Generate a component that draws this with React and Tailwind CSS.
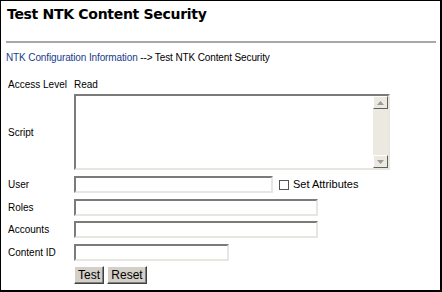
import React from "react";

const inset = "border-2 border-t-[#7b7b7b] border-l-[#7b7b7b] border-b-[#e8e6e0] border-r-[#e8e6e0] bg-white";

function Row({ label, children, className = "" }) {
  return (
    <div className={"flex items-center " + className}>
      <div className="w-[66px] shrink-0">{label}</div>
      {children}
    </div>
  );
}

function Btn({ children, w }) {
  return (
    <button
      className={"h-[18px] bg-[#d4d0c8] border border-t-[#ffffff] border-l-[#ffffff] border-b-[#404040] border-r-[#404040] shadow-[inset_-1px_-1px_0_#808080] text-[12px] text-black leading-none " + w}
      style={{ fontFamily: '"Liberation Sans", Arial, sans-serif' }}
    >
      {children}
    </button>
  );
}

export default function App() {
  return (
    <div className="w-[442px] h-[292px] bg-white border-l border-t border-r-2 border-b-2 border-black overflow-hidden text-black"
      style={{ fontFamily: '"Liberation Sans", Arial, sans-serif' }}>
      <div className="pl-[6px] pt-[5px] text-[14px] leading-[17px] font-bold tracking-[-0.3px]" style={{ fontFamily: '"DejaVu Sans", Verdana, sans-serif' }}>
        Test NTK Content Security
      </div>
      <div className="ml-[5px] mr-[4px] mt-[18px] h-[2px] bg-[#a8a8a8]" />
      <div className="pl-[5px] mt-[9px] text-[10px] leading-[12px] tracking-[-0.12px]">
        <span className="text-[#1a3c8c]">NTK Configuration Information</span> --&gt; Test NTK Content Security
      </div>
      <div className="pl-[7px] mt-[13px] text-[10px] flex flex-col">
        <Row label="Access Level" className="h-[14px]">
          <span>Read</span>
        </Row>
        <Row label="Script" className="mt-[3px]">
          <div className={"w-[316px] h-[76px] flex justify-end " + inset}>
            <div className="w-[15px] h-full bg-[#ece9e0] flex flex-col justify-between">
              <div className="h-[13px] w-[15px] bg-[#ece9e0] border border-t-white border-l-white border-b-[#606060] border-r-[#606060] flex items-center justify-center">
                <svg width="7" height="4" viewBox="0 0 7 4"><path d="M3.5 0 L7 4 L0 4 Z" fill="#9a9a9a" /></svg>
              </div>
              <div className="h-[13px] w-[15px] bg-[#ece9e0] border border-t-white border-l-white border-b-[#606060] border-r-[#606060] flex items-center justify-center">
                <svg width="7" height="4" viewBox="0 0 7 4"><path d="M0 0 L7 0 L3.5 4 Z" fill="#9a9a9a" /></svg>
              </div>
            </div>
          </div>
        </Row>
        <Row label="User" className="mt-[6px]">
          <div className={"w-[199px] h-[17px] " + inset} />
          <div className="ml-[6px] w-[10px] h-[10px] border border-[#555] bg-white" />
          <span className="ml-[4px] text-[11px]">Set Attributes</span>
        </Row>
        <Row label="Roles" className="mt-[6px]">
          <div className={"w-[244px] h-[17px] " + inset} />
        </Row>
        <Row label="Accounts" className="mt-[5px]">
          <div className={"w-[244px] h-[17px] " + inset} />
        </Row>
        <Row label="Content ID" className="mt-[6px]">
          <div className={"w-[155px] h-[17px] " + inset} />
        </Row>
        <Row label="" className="mt-[5px]">
          <div className="flex gap-[3px]">
            <Btn w="w-[30px]">Test</Btn>
            <Btn w="w-[40px]">Reset</Btn>
          </div>
        </Row>
      </div>
    </div>
  );
}
